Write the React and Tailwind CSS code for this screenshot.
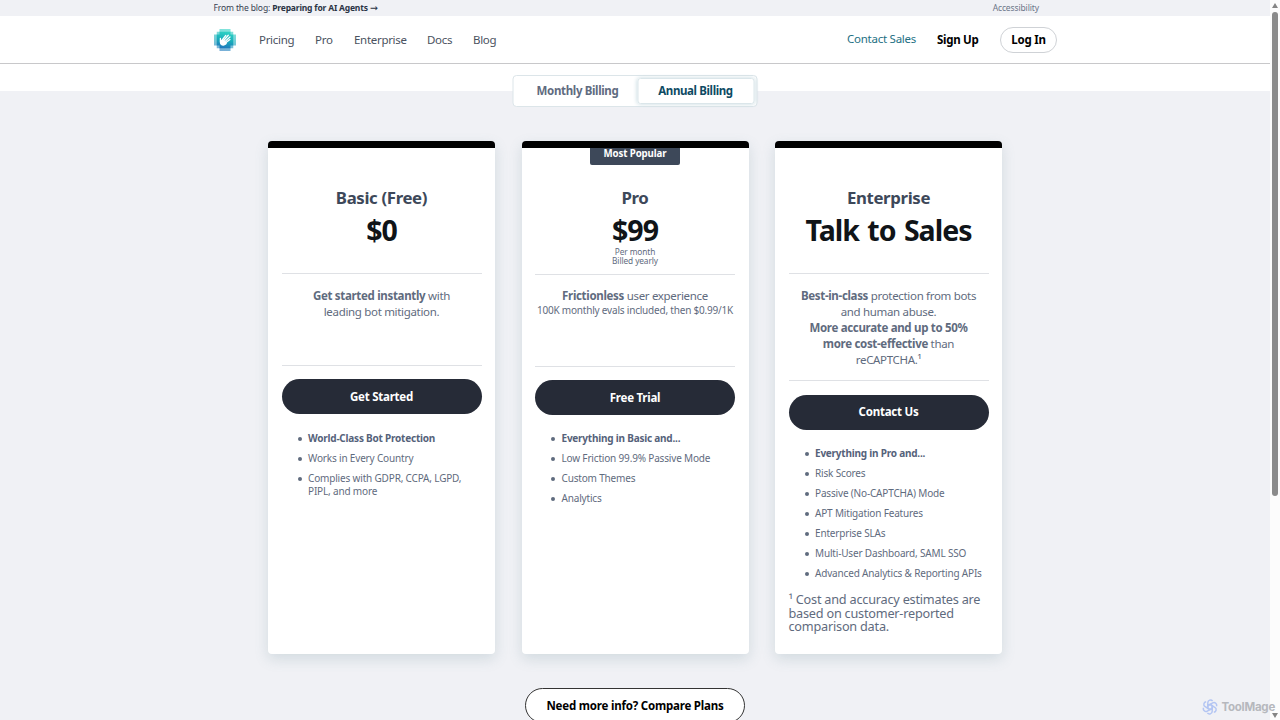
import clsx from 'clsx';

const navLinks = [
    { label: 'Pricing', className: 'w-[35px]' },
    { label: 'Pro', className: 'w-[18px]' },
    { label: 'Enterprise', className: 'w-[52px]' },
    { label: 'Docs', className: 'w-[25px]' },
    { label: 'Blog', className: 'w-[24px]' },
];

function Logo() {
    return (
        <svg className="h-[22px] w-[22px]" viewBox="0 0 22 22">
            <defs>
                <linearGradient id="logo" x1="0.6" y1="0" x2="0.4" y2="1">
                    <stop offset="0" stopColor="#2fd3c4" />
                    <stop offset="0.5" stopColor="#19aebb" />
                    <stop offset="1" stopColor="#1f78bd" />
                </linearGradient>
            </defs>
            <path
                fill="url(#logo)"
                fillOpacity="0.6"
                d="M5.5 0h11v2.75h2.75V5.5H22v11h-2.75v2.75H16.5V22h-11v-2.75H2.75V16.5H0v-11h2.75V2.75H5.5z"
            />
            <path
                fill="url(#logo)"
                d="M5.5 2.75h11V5.5h2.75v11H16.5v2.75h-11V16.5H2.75v-11H5.5z"
            />
            <path
                fill="none"
                stroke="#fff"
                strokeLinecap="round"
                strokeWidth="1.3"
                d="M8.600 10.500 11.800 6.400M10.200 11l4.100-4.700M11.600 12l4.400-4M12 13.600l4-3M6.400 12.500V9.500"
            />
            <path
                fill="#fff"
                d="M6 11.500 8.300 10.200l1.700 0.600 3 3c-.4 1.700-1.700 2.700-3.500 2.900C7.300 16.800 5.900 15.500 5.800 13.500z"
            />
        </svg>
    );
}

function Header() {
    return (
        <header>
            <div className="flex h-4 items-center justify-between bg-[#f0f1f5] pl-[213.500px] pr-[231px] text-[8.500px] leading-4 text-[#374151]">
                <p className="tracking-[-0.13px]">
                    From the blog:{' '}
                    <b className="tracking-[-0.18px] text-[#2b3444]">
                        Preparing for AI Agents{' '}
                        <span className="font-['DejaVu_Sans',sans-serif] text-[9.500px] font-normal leading-none">→</span>
                    </b>
                </p>
                <a className="text-[#6b7588] tracking-[-0.12px]">Accessibility</a>
            </div>
            <div className="flex h-12 items-center border-b border-[#c8c8ca] bg-white pl-[214px] pr-[213px] text-[11.500px]">
                <Logo />
                <nav className="ml-[23px] flex gap-[21px] whitespace-nowrap text-[#4a5260] tracking-[-0.3px]">
                    {navLinks.map((link) => (
                        <a key={link.label} className={link.className}>
                            {link.label}
                        </a>
                    ))}
                </nav>
                <div className="ml-auto flex items-center whitespace-nowrap">
                    <a className="-mt-px w-[69px] text-[#247083] tracking-[-0.25px]">Contact Sales</a>
                    <a className="ml-[21px] w-[43px] font-bold text-black tracking-[-0.3px]">Sign Up</a>
                    <a className="ml-[20px] flex h-[26px] w-[57px] items-center justify-center rounded-full border border-[#cfd2d6] font-bold text-black tracking-[-0.2px]">
                        Log In
                    </a>
                </div>
            </div>
        </header>
    );
}

function BillingToggle() {
    return (
        <div className="mx-auto flex h-8 w-[245px] -translate-x-[0.5px] rounded-[4px] border border-[#dce5e9] bg-white p-[2px] text-[11.500px] font-bold">
            <button className="flex-1 pl-[3px] text-[#5f6b80] tracking-[-0.35px]">Monthly Billing</button>
            <button className="w-[117px] rounded-[3px] border border-[#dbe6ea] text-[#0d4a63] tracking-[-0.38px] shadow-[0_0_4px_#c5d9e0]">
                Annual Billing
            </button>
        </div>
    );
}

function PlanCard({ title, price, billing, description, cta, features, note, badge }) {
    return (
        <section className="relative h-[512.500px] w-[227px] rounded-[4px] border-t-[7px] border-black bg-white px-[13.500px] shadow-[0_5px_14px_rgba(90,130,140,0.2)]">
            {badge && (
                <span className="absolute left-1/2 top-0 h-[17px] w-[90px] -translate-x-1/2 rounded-b-[2px] bg-[#3d4859] text-center text-[9.700px] font-bold leading-[12px] text-white tracking-[-0.1px]">
                    {badge}
                </span>
            )}
            <div
                className={clsx(
                    'border-b border-[#dfe1e5] pt-[38px] text-center',
                    badge ? 'h-[127px]' : 'h-[126px]'
                )}
            >
                <h2 className="text-[16.800px] font-bold leading-6 text-[#3d4859] tracking-[-0.35px]">{title}</h2>
                <p className="mt-[2px] whitespace-nowrap text-[28.500px] font-bold leading-9 text-[#101418] tracking-[-1px] [word-spacing:2px]">
                    {price}
                </p>
                {billing && (
                    <p className="-mt-[1.500px] text-[8.300px] leading-[9.300px] text-[#5f6b7e] tracking-[-0.1px]">
                        {billing[0]}
                        <br />
                        {billing[1]}
                    </p>
                )}
            </div>
            <div
                className={clsx(
                    'border-b border-[#dfe1e5] text-center text-[11.500px] leading-4 text-[#5f6b7e] tracking-[-0.32px]',
                    badge ? 'pt-[13px]' : 'pt-[14px]',
                    note ? 'h-[107px]' : 'h-[92px]'
                )}
            >
                {description}
            </div>
            <button
                className={clsx(
                    'h-[35px] w-full rounded-full bg-[#262b37] text-[11.500px] font-bold text-white tracking-[-0.25px]',
                    note ? 'mt-[13.500px]' : 'mt-[13px]'
                )}
            >
                {cta}
            </button>
            <ul
                className={clsx(
                    'space-y-[6.670px] whitespace-nowrap pl-[16px] text-[10px] leading-[13.330px] text-[#5f6b7e] tracking-[-0.17px]',
                    badge ? 'mt-[17px]' : 'mt-[17.700px]'
                )}
            >
                {features.map((feature, i) => (
                    <li key={i} className={clsx('flex gap-[6.500px]', i === 0 && 'font-bold text-[#55627a] tracking-[-0.22px]')}>
                        <span className="mt-[5px] h-[4px] w-[4px] shrink-0 rounded-full bg-[#5f6b7e]" />
                        <span>{feature}</span>
                    </li>
                ))}
            </ul>
            {note}
        </section>
    );
}

const plans = [
    {
        title: 'Basic (Free)',
        price: '$0',
        description: (
            <>
                <b>Get started instantly</b> with
                <br />
                leading bot mitigation.
            </>
        ),
        cta: 'Get Started',
        features: [
            'World-Class Bot Protection',
            'Works in Every Country',
            <>
                Complies with GDPR, CCPA, LGPD,
                <br />
                PIPL, and more
            </>,
        ],
    },
    {
        title: 'Pro',
        price: '$99',
        badge: 'Most Popular',
        billing: ['Per month', 'Billed yearly'],
        description: (
            <>
                <b>Frictionless</b> user experience
                <p className="-mt-[0.5px] whitespace-nowrap text-[10px] leading-[13px] tracking-[-0.2px]">
                    100K monthly evals included, then $0.99/1K
                </p>
            </>
        ),
        cta: 'Free Trial',
        features: [
            'Everything in Basic and...',
            'Low Friction 99.9% Passive Mode',
            'Custom Themes',
            'Analytics',
        ],
    },
    {
        title: 'Enterprise',
        price: 'Talk to Sales',
        description: (
            <>
                <b>Best-in-class</b> protection from bots
                <br />
                and human abuse.
                <br />
                <b>More accurate and up to 50%</b>
                <br />
                <b>more cost-effective</b> than
                <br />
                reCAPTCHA.¹
            </>
        ),
        cta: 'Contact Us',
        features: [
            'Everything in Pro and...',
            'Risk Scores',
            'Passive (No-CAPTCHA) Mode',
            'APT Mitigation Features',
            'Enterprise SLAs',
            'Multi-User Dashboard, SAML SSO',
            'Advanced Analytics & Reporting APIs',
        ],
        note: (
            <p className="mt-[13px] whitespace-nowrap text-[12.700px] leading-[13.330px] text-[#5f6b7e] tracking-[-0.22px]">
                ¹ Cost and accuracy estimates are
                <br />
                based on customer-reported
                <br />
                comparison data.
            </p>
        ),
    },
];

function Scrollbar() {
    return (
        <div className="flex w-[10px] shrink-0 flex-col items-center bg-[#fcfcfc]">
            <svg className="mt-[2px] h-[7px] w-[8px]" viewBox="0 0 8 7">
                <path fill="#858585" d="M4 1 7 6H1z" />
            </svg>
            <div className="mt-[3px] h-[484px] w-[6px] rounded-full bg-[#8b8b8b]" />
            <svg className="mb-[1px] mt-auto h-[7px] w-[8px]" viewBox="0 0 8 7">
                <path fill="#858585" d="M4 6 7 1H1z" />
            </svg>
        </div>
    );
}

function Watermark() {
    return (
        <div className="absolute bottom-[4px] right-[5px] flex items-center gap-[3px] text-[11.500px] font-bold leading-[18px] text-[#b6b8bd]">
            <svg
                className="h-4 w-4"
                viewBox="0 0 24 24"
                fill="none"
                stroke="#b3c5f3"
                strokeWidth="2.2"
            >
                {[0, 60, 120, 180, 240, 300].map((angle) => (
                    <path
                        key={angle}
                        transform={`rotate(${angle} 12 12)`}
                        d="M12 8.200 8.700 10V5.500a4 4 0 0 1 7.200-2.400M12 8.200l4.500 2.600"
                    />
                ))}
            </svg>
            <span className="font-['Inter',sans-serif] tracking-[-0.25px]">ToolMage</span>
        </div>
    );
}

export default function App() {
    return (
        <div className="relative flex h-[720px] w-[1280px] overflow-hidden bg-[#f0f1f5] font-['Noto_Sans',sans-serif]">
            <div className="w-[1270px] shrink-0">
                <Header />
                <div className="h-[27px] bg-white pt-[11px]">
                    <BillingToggle />
                </div>
                <main className="mt-[50px] flex justify-center gap-[26.500px]">
                    {plans.map((plan) => (
                        <PlanCard key={plan.title} {...plan} />
                    ))}
                </main>
                <button className="mx-auto mt-[34.500px] block h-[35px] w-[220px] rounded-full border border-[#333] bg-white text-[11.500px] font-bold text-black tracking-[-0.2px]">
                    Need more info? Compare Plans
                </button>
            </div>
            <Scrollbar />
            <Watermark />
        </div>
    );
}
